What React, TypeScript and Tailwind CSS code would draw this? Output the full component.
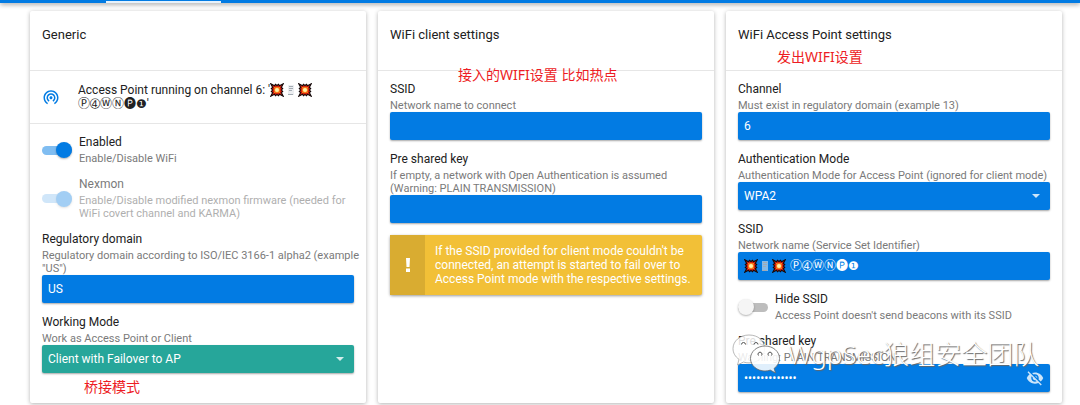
import React, { useId } from "react";

function Burst() {
  return (
    <svg viewBox="0 0 14 14" className="size-[14px] shrink-0" aria-hidden="true">
      <path d="M.8.8l3.700 1.900L5.400 1.300 7 2.500l1.600-1.200.9 1.400L13.200.8l-1.900 3.700 1.400.9L11.500 7l1.200 1.600-1.400.9 1.900 3.700-3.700-1.900-.9 1.400L7 11.500l-1.600 1.200-.9-1.400L.8 13.200l1.900-3.700-1.400-.9L2.500 7 1.300 5.400l1.400-.9z" fill="#d9200c" stroke="#14090a" strokeWidth="1.100" />
      <path d="M3.800 3.800l2.200.8 1-1 1 1 2.200-.8-.8 2.200 1 1-1 1 .8 2.200-2.200-.8-1 1-1-1-2.200.8.8-2.200-1-1 1-1z" fill="#ff8a1c" />
      <circle cx="7" cy="7" r="2" fill="#fff2a8" />
    </svg>
  );
}

function Computer() {
  return (
    <svg viewBox="0 0 14 14" className="size-[14px] shrink-0" aria-hidden="true">
      <path d="M4 2h6v10H4z" fill="#dfe3e8" fillOpacity=".6" />
      <path d="M5 3.500h4M5 5.500h4M5 7.500h3M4 11.500h5" stroke="#a3abb3" strokeWidth="1" fill="none" />
    </svg>
  );
}

function Emojis() {
  return (
    <span className="inline-flex align-middle">
      <Burst />
      <Computer />
      <Burst />
    </span>
  );
}

function ApIcon() {
  return (
    <svg viewBox="0 0 24 24" className="size-[18px] shrink-0 fill-[#027be3]" aria-hidden="true">
      <path d="M12 11c-1.100 0-2 .9-2 2s.9 2 2 2 2-.9 2-2-.9-2-2-2zm6 2c0-3.310-2.690-6-6-6s-6 2.690-6 6c0 2.220 1.210 4.150 3 5.190l1-1.740c-1.190-.7-2-1.970-2-3.450 0-2.210 1.790-4 4-4s4 1.790 4 4c0 1.480-.81 2.750-2 3.450l1 1.740c1.790-1.040 3-2.970 3-5.190zM12 3C6.480 3 2 7.480 2 13c0 3.700 2.010 6.920 4.990 8.650l1-1.730C5.610 18.530 4 15.960 4 13c0-4.420 3.580-8 8-8s8 3.580 8 8c0 2.960-1.610 5.530-4 6.920l1 1.730c2.990-1.730 5-4.950 5-8.650 0-5.520-4.480-10-10-10z" />
    </svg>
  );
}

function EyeOff() {
  return (
    <svg viewBox="0 0 24 24" className="size-[18px] fill-white/80" aria-hidden="true">
      <path d="M12 7c2.760 0 5 2.240 5 5 0 .65-.13 1.260-.36 1.830l2.920 2.920c1.510-1.260 2.700-2.890 3.430-4.750-1.730-4.390-6-7.500-11-7.500-1.400 0-2.740.25-3.980.7l2.160 2.160C10.740 7.130 11.350 7 12 7zM2 4.270l2.280 2.280.46.46C3.080 8.300 1.780 10.020 1 12c1.730 4.390 6 7.500 11 7.500 1.550 0 3.030-.3 4.380-.84l.42.42L19.730 22 21 20.730 3.270 3 2 4.270zM7.530 9.800l1.550 1.550c-.05.21-.08.43-.08.65 0 1.660 1.340 3 3 3 .22 0 .44-.03.65-.08l1.550 1.550c-.67.33-1.410.53-2.200.53-2.760 0-5-2.240-5-5 0-.79.2-1.530.53-2.200zm4.310-.78l3.150 3.150.02-.16c0-1.660-1.340-3-3-3l-.17.01z" />
    </svg>
  );
}

function WeChat() {
  return (
    <svg viewBox="0 0 50 42" className="h-[42px] w-[50px] shrink-0" aria-hidden="true">
      <path d="M17 2C8 2 1 8 1 15.500c0 4.500 2.300 8.300 6 10.800L5.500 32l6-3c1.800.6 3.500.9 5.500.9 9 0 15.500-6.400 15.500-14.400S26 2 17 2z" fill="#fff" fillOpacity=".85" stroke="#888" strokeWidth=".6" />
      <path d="M33 13c-8 0-14.500 5.500-14.500 12.500S25 38 33 38c1.900 0 3.700-.3 5.300-.9L43.500 40l-1.400-4.600c3.300-2.300 5.400-5.900 5.400-9.900C47.500 18.500 41 13 33 13z" fill="#fff" fillOpacity=".88" stroke="#666" strokeWidth=".8" />
      <path d="M9.500 11.500a2 2 0 0 1 4 0M22 11.500a2 2 0 0 1 4 0M26.500 22.500a2 2 0 1 1 3 0M36.500 22.500a2 2 0 1 1 3 0" fill="none" stroke="#555" strokeWidth="1" />
    </svg>
  );
}

const labelText = "block text-[12px] leading-[19px] text-[#212121]";
const subText = "block whitespace-pre-line text-[11px] leading-[13px] text-[#7a7a7a]";
const box = "flex h-7 w-full items-center rounded-[2px] px-1.5 shadow-[0_1px_2px_rgba(0,0,0,0.35)]";
const control = "min-w-0 flex-1 appearance-none bg-transparent text-[12px] text-white outline-none";

function Card({ title, children }: { title: string; children: React.ReactNode }) {
  return (
    <section className="relative rounded-[2px] bg-white pb-[11px] shadow-[0_1px_4px_rgba(0,0,0,0.3)]">
      <h2 className="h-[60px] border-b border-[#e6e6e6] px-3 pt-3 text-[13px] leading-6 text-[#212121]">{title}</h2>
      {children}
    </section>
  );
}

type FieldProps = {
  label: string;
  sub: string;
  value?: string;
  type?: string;
  options?: string[];
  green?: boolean;
  prefix?: React.ReactNode;
  suffix?: React.ReactNode;
};

function Field({ label, sub, value = "", type = "text", options, green, prefix, suffix }: FieldProps) {
  const id = useId();
  return (
    <div>
      <label htmlFor={id} className="-mr-2 block">
        <span className={labelText}>{label}</span>
        <span className={subText}>{sub}</span>
      </label>
      <div className={`${box} ${green ? "bg-[#26a69a]" : "bg-[#027be3]"}`}>
        {prefix}
        {options ? (
          <select id={id} className={control}>
            {options.map((o) => (
              <option key={o}>{o}</option>
            ))}
          </select>
        ) : (
          <input id={id} type={type} defaultValue={value} className={control} />
        )}
        {options && (
          <svg viewBox="0 0 8 4" className="mr-1 h-1 w-2 fill-white/80" aria-hidden="true">
            <path d="M0 0h8L4 4z" />
          </svg>
        )}
        {suffix}
      </div>
    </div>
  );
}

function Toggle({ label, sub, on, disabled }: { label: string; sub: string; on?: boolean; disabled?: boolean }) {
  return (
    <label className={`flex items-center gap-[7px] ${disabled ? "opacity-60" : ""}`}>
      <input type="checkbox" role="switch" defaultChecked={on} disabled={disabled} className="peer sr-only" />
      <span className={`flex h-[18px] w-[30px] shrink-0 items-center pt-0.5 ${disabled ? "opacity-60" : ""}`}>
        <span className={`flex h-[9px] w-[30px] items-center rounded-full ${on ? "justify-end bg-[#027be3]/50" : "bg-[#bdbdbd]"}`}>
          <span className={`size-4 shrink-0 rounded-full shadow-[0_1px_2px_rgba(0,0,0,0.3)] ${on ? "bg-[#027be3]" : "bg-[#f5f5f5]"}`} />
        </span>
      </span>
      <span>
        <span className={labelText}>{label}</span>
        <span className={subText}>{sub}</span>
      </span>
    </label>
  );
}

const note = "absolute whitespace-nowrap font-['Noto_Sans','Noto_Sans_CJK_SC',sans-serif] text-[14px] leading-5 text-[#ed1c24]";

export default function App() {
  return (
    <div className="bg-white font-[Roboto,'DejaVu_Sans','Noto_Sans_CJK_SC',sans-serif]">
      <header className="flex h-[3px] bg-[#027be3] shadow-[0_1px_5px_rgba(0,0,0,0.5)]">
        <span className="ml-[106px] mt-px h-0.5 w-[115px] bg-white/90" />
      </header>
      <main className="grid grid-cols-3 gap-3 pb-0.5 pl-[30px] pr-[18px] pt-2">
        <Card title="Generic">
          <div className="flex h-[53px] items-center gap-[18px] border-b border-[#e6e6e6] px-3">
            <ApIcon />
            <p className="text-[12px] leading-[14px] text-[#212121]">
              Access Point running on channel 6: '<Emojis />
              <br />
              Ⓟ➃ⓌⓃ🅟❶'
            </p>
          </div>
          <div className="flex flex-col gap-2.5 px-3 pt-[9px]">
            <Toggle label="Enabled" sub="Enable/Disable WiFi" on />
            <Toggle label="Nexmon" sub="Enable/Disable modified nexmon firmware (needed for WiFi covert channel and KARMA)" on disabled />
            <Field label="Regulatory domain" sub={'Regulatory domain according to ISO/IEC 3166-1 alpha2 (example\n"US")'} value="US" />
            <Field label="Working Mode" sub="Work as Access Point or Client" options={["Client with Failover to AP", "Access Point", "Client"]} green />
          </div>
          <p className={`${note} bottom-1.5 left-[54px]`}>桥接模式</p>
        </Card>

        <Card title="WiFi client settings">
          <div className="flex flex-col gap-2.5 px-3 pt-[9px]">
            <Field label="SSID" sub="Network name to connect" />
            <Field label="Pre shared key" sub={"If empty, a network with Open Authentication is assumed\n(Warning: PLAIN TRANSMISSION)"} type="password" />
            <div role="alert" className="mt-0.5 flex rounded-[2px] bg-[#f2c037] text-[12px] leading-[14px] text-white shadow-[0_1px_3px_rgba(0,0,0,0.4)]">
              <span className="flex w-[35px] shrink-0 items-center justify-center bg-[#d9ac31]">
                <svg viewBox="0 0 4 14" className="h-3.5 w-1 fill-white" aria-hidden="true">
                  <path d="M0 0h4l-.5 9h-3zM0 10.500h4V14H0z" />
                </svg>
              </span>
              <p className="px-2.5 py-[9px]">
                If the SSID provided for client mode couldn't be connected, an attempt is started to fail over to Access Point mode with the respective settings.
              </p>
            </div>
          </div>
          <p className={`${note} left-20 top-[54px]`}>接入的WIFI设置 比如热点</p>
        </Card>

        <Card title="WiFi Access Point settings">
          <div className="flex flex-col gap-2.5 px-3 pt-[9px]">
            <Field label="Channel" sub="Must exist in regulatory domain (example 13)" value="6" />
            <Field label="Authentication Mode" sub="Authentication Mode for Access Point (ignored for client mode)" options={["WPA2", "Open"]} />
            <Field label="SSID" sub="Network name (Service Set Identifier)" value="Ⓟ➃ⓌⓃ🅟❶" prefix={<span className="mr-1 flex"><Emojis /></span>} />
            <Toggle label="Hide SSID" sub="Access Point doesn't send beacons with its SSID" />
            <Field
              label="Pre shared key"
              sub="Warning: PLAIN TRANSMISSION"
              type="password"
              value="MaMe82-P4wnP1"
              suffix={<button type="button" aria-label="Show password"><EyeOff /></button>}
            />
          </div>
          <p className={`${note} left-[51px] top-9`}>发出WIFI设置</p>
          <div className="pointer-events-none absolute bottom-7 left-1.5 flex items-center gap-1.5 whitespace-nowrap font-['Noto_Sans','Noto_Sans_CJK_SC',sans-serif] text-[26px] font-light leading-8 text-white [text-shadow:1px_1px_1px_#666]">
            <WeChat />
            WgpSec狼组安全团队
          </div>
        </Card>
      </main>
    </div>
  );
}
